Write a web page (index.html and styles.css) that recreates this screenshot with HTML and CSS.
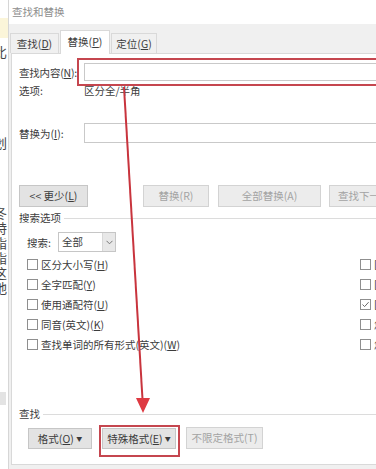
FILE: index.html
```html
<!DOCTYPE html>
<html lang="zh-CN">

<head>
    <meta charset="UTF-8">
    <meta name="viewport" content="width=device-width, initial-scale=1.0">
    <title>查找和替换</title>
    <link rel="stylesheet" href="styles.css">
</head>

<body>
    <div class="screen">
        <div class="doc-edge">
            <div class="doc-mark"></div>
            <div class="doc-char first">比</div>
            <div class="doc-char second">划</div>
            <div class="doc-char third">冬</div>
            <div class="doc-char">特</div>
            <div class="doc-char">酯</div>
            <div class="doc-char">酯</div>
            <div class="doc-char">这</div>
            <div class="doc-char">地</div>
            <div class="doc-grey"></div>
        </div>

        <div class="dialog">
            <div class="title-bar">查找和替换</div>
            <div class="dialog-body">
                <div class="tabs">
                    <div class="tab tab-find">查找(<u>D</u>)</div>
                    <div class="tab tab-replace active">替换(<u>P</u>)</div>
                    <div class="tab tab-goto">定位(<u>G</u>)</div>
                </div>

                <div class="panel">
                    <div class="field-row find-row">
                        <span class="field-label short">查找内容(<u>N</u>):</span>
                        <div class="mark-box find-mark">
                            <div class="text-input"></div>
                        </div>
                    </div>

                    <div class="option-row">
                        <span class="field-label">选项:</span>
                        <span>区分全/半角</span>
                    </div>

                    <div class="field-row replace-row">
                        <span class="field-label">替换为(<u>I</u>):</span>
                        <div class="text-input"></div>
                    </div>

                    <div class="button-row">
                        <div class="btn btn-less">&lt;&lt; 更少(<u>L</u>)</div>
                        <div class="btn disabled btn-replace">替换(R)</div>
                        <div class="btn disabled btn-all">全部替换(A)</div>
                        <div class="btn disabled btn-next">查找下一处(F)</div>
                    </div>

                    <div class="group-title"><span>搜索选项</span></div>

                    <div class="search-row">
                        <span class="search-label">搜索:</span>
                        <div class="select">
                            <span class="select-value">全部</span>
                            <span class="select-arrow">
                                <svg width="7" height="5" viewBox="0 0 7 5">
                                    <path d="M0.5 0.8 L3.5 3.8 L6.5 0.8" fill="none" stroke="#777" stroke-width="1" />
                                </svg>
                            </span>
                        </div>
                    </div>

                    <div class="options">
                        <div class="options-col">
                            <div class="check-row"><span class="check"></span>区分大小写(<u>H</u>)</div>
                            <div class="check-row"><span class="check"></span>全字匹配(<u>Y</u>)</div>
                            <div class="check-row"><span class="check"></span>使用通配符(<u>U</u>)</div>
                            <div class="check-row"><span class="check"></span>同音(英文)(<u>K</u>)</div>
                            <div class="check-row"><span class="check"></span>查找单词的所有形式(英文)(<u>W</u>)</div>
                        </div>
                        <div class="options-col">
                            <div class="check-row"><span class="check"></span>区分前缀(<u>X</u>)</div>
                            <div class="check-row"><span class="check"></span>区分后缀(<u>T</u>)</div>
                            <div class="check-row"><span class="check checked">
                                    <svg width="9" height="9" viewBox="0 0 9 9">
                                        <path d="M1.5 4.5 L3.6 6.6 L7.6 2.2" fill="none" stroke="#6a6a6a" stroke-width="1" />
                                    </svg>
                                </span>区分全/半角(<u>M</u>)</div>
                            <div class="check-row"><span class="check"></span>忽略标点符号(<u>S</u>)</div>
                            <div class="check-row"><span class="check"></span>忽略空格(<u>W</u>)</div>
                        </div>
                    </div>

                    <div class="group-title find-title"><span>查找</span></div>

                    <div class="bottom-row">
                        <div class="btn menu-btn btn-format">格式(<u>O</u>) <span class="caret">▼</span></div>
                        <div class="mark-box special-mark">
                            <div class="btn menu-btn btn-special">特殊格式(<u>E</u>) <span class="caret">▼</span></div>
                        </div>
                        <div class="btn disabled btn-noformat">不限定格式(T)</div>
                    </div>
                </div>
            </div>
        </div>
    </div>

    <svg class="arrow" width="376" height="469" viewBox="0 0 376 469">
        <line x1="124" y1="87" x2="142.6" y2="401" stroke="#c8343d" stroke-width="2" />
        <polygon points="136,398 150,398 143,413" fill="#de3a42" />
    </svg>
</body>

</html>
```

FILE: styles.css
```css
* {
    box-sizing: border-box;
}

body {
    margin: 0;
    padding: 0;
    background-color: #ffffff;
    font-family: "Noto Sans CJK SC", "Noto Sans", sans-serif;
    font-size: 10.5px;
    color: #3c3c3c;
    overflow: hidden;
}

u {
    text-decoration: underline;
    text-underline-offset: 1px;
}

.screen {
    display: flex;
    width: 376px;
    height: 469px;
    overflow: hidden;
}

/* document behind the dialog */
.doc-edge {
    flex: 0 0 8px;
    overflow: hidden;
    background-color: #ffffff;
}

.doc-mark {
    height: 20px;
    margin-top: 18px;
    background-color: #fbf5d9;
}

.doc-char {
    width: 20px;
    height: 15px;
    margin-left: -6px;
    font-size: 13px;
    line-height: 15px;
    color: #444;
    white-space: nowrap;
    overflow: hidden;
}

.doc-char.first {
    margin-top: 6px;
}

.doc-char.second {
    margin-top: 76px;
}

.doc-char.third {
    margin-top: 55px;
}

.doc-grey {
    width: 6px;
    height: 13px;
    margin-top: 97px;
    background-color: #e3e3e3;
}

/* dialog */
.dialog {
    flex: 0 0 470px;
    display: flex;
    flex-direction: column;
    border-left: 1px solid #d6d6d6;
}

.title-bar {
    height: 24px;
    padding-left: 3px;
    line-height: 24px;
    color: #8e8e8e;
    background-color: #ffffff;
}

.dialog-body {
    flex: 1;
    padding-left: 2px;
    background-color: #f0f0f0;
}

.tabs {
    display: flex;
    align-items: flex-end;
    gap: 1px;
    height: 29px;
    margin-left: -1px;
}

.tab {
    height: 20px;
    line-height: 19px;
    text-align: center;
    white-space: nowrap;
    border: 1px solid #d9d9d9;
    border-bottom: none;
    background-color: #f0f0f0;
}

.tab-find {
    width: 49px;
}

.tab-replace {
    width: 50px;
}

.tab-goto {
    width: 46px;
}

.tab.active {
    position: relative;
    height: 24px;
    margin-bottom: -1px;
    line-height: 22px;
    background-color: #ffffff;
}

.panel {
    padding: 4px 0 7px 7px;
    border: 1px solid #d9d9d9;
    border-right: none;
    background-color: #ffffff;
}

.field-row {
    display: flex;
    align-items: center;
}

.field-label {
    flex: 0 0 65px;
    white-space: nowrap;
}

.field-label.short {
    flex-basis: 58px;
    letter-spacing: -0.2px;
}

.text-input {
    flex: 1;
    height: 19px;
    border: 1px solid #c9c9c9;
    background-color: #ffffff;
}

.find-row .text-input {
    height: 18px;
}

.mark-box {
    border: 2px solid #c5464f;
}

.find-mark {
    display: flex;
    flex: 1;
    padding: 3px 0 3px 5px;
}

.option-row {
    display: flex;
    height: 10px;
    line-height: 10px;
}

.replace-row {
    margin-top: 27px;
}

.replace-row .text-input {
    height: 20px;
}

.button-row {
    display: flex;
    margin-top: 42px;
}

.btn {
    height: 22px;
    line-height: 20px;
    text-align: center;
    border: 1px solid #c6c6c6;
    background-color: #e3e3e3;
    white-space: nowrap;
}

.btn.disabled {
    color: #a3a3a3;
    border-color: #d3d3d3;
    background-color: #ececec;
}

.btn-less {
    width: 69px;
}

.btn-replace {
    width: 66px;
    margin-left: 55px;
}

.btn-all {
    width: 103px;
    margin-left: 9px;
}

.btn-next {
    width: 103px;
    margin-left: 8px;
    text-align: left;
    padding-left: 8px;
}

.group-title {
    display: flex;
    align-items: center;
    gap: 3px;
    height: 12px;
    margin-top: 5px;
    line-height: 12px;
}

.group-title::after {
    content: "";
    flex: 1;
    border-top: 1px solid #dcdcdc;
}

.find-title {
    margin-top: 54px;
}

.search-row {
    display: flex;
    align-items: center;
    margin-top: 8px;
    padding-left: 8px;
}

.search-label {
    width: 31px;
}

.select {
    display: flex;
    width: 58px;
    height: 20px;
    border: 1px solid #c6c6c6;
}

.select-value {
    flex: 1;
    padding-left: 3px;
    line-height: 18px;
}

.select-arrow {
    display: flex;
    align-items: center;
    justify-content: center;
    width: 13px;
    background-color: #e8e8e8;
    border-left: 1px solid #d8d8d8;
}

.options {
    display: grid;
    grid-template-columns: 333px 1fr;
    margin-top: 2px;
    padding-left: 8px;
}

.check-row {
    display: flex;
    align-items: center;
    height: 20px;
    white-space: nowrap;
}

.check {
    display: flex;
    align-items: center;
    justify-content: center;
    width: 11px;
    height: 11px;
    margin-right: 3px;
    border: 1px solid #8f8f8f;
    background-color: #ffffff;
}

.bottom-row {
    display: flex;
    align-items: flex-start;
    margin-top: 5px;
    padding-left: 9px;
}

.menu-btn {
    height: 21px;
    line-height: 19px;
}

.caret {
    font-size: 6px;
    vertical-align: 2px;
}

.btn-format {
    width: 64px;
    margin-top: 3px;
}

.special-mark {
    margin-left: 7px;
    padding: 1px 2px 6px 1px;
}

.btn-special {
    width: 74px;
}

.btn-noformat {
    width: 77px;
    margin-top: 2px;
    margin-left: 6px;
}

.arrow {
    position: absolute;
    top: 0;
    left: 0;
    pointer-events: none;
}
```
